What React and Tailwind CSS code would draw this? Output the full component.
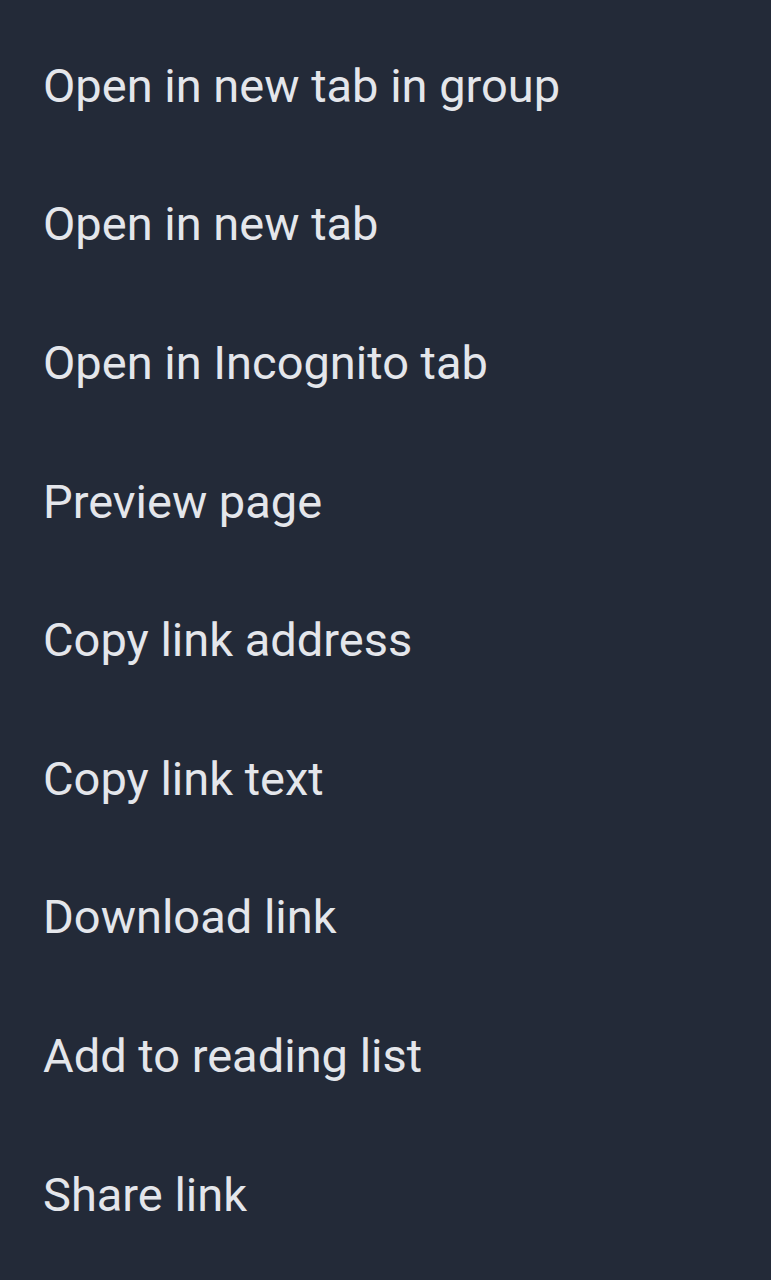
const items = [
  'Open in new tab in group',
  'Open in new tab',
  'Open in Incognito tab',
  'Preview page',
  'Copy link address',
  'Copy link text',
  'Download link',
  'Add to reading list',
  'Share link',
];

export default function App() {
  return (
    <div className="min-h-[1280px] w-full bg-[#232a38] pt-[16px] font-['Roboto','Noto_Sans',sans-serif]">
      <ul>
        {items.map((label) => (
          <li
            key={label}
            className="flex h-[138.6px] items-center px-[43px] text-[47px] leading-none text-[#e4e6eb]"
          >
            {label}
          </li>
        ))}
      </ul>
    </div>
  );
}
